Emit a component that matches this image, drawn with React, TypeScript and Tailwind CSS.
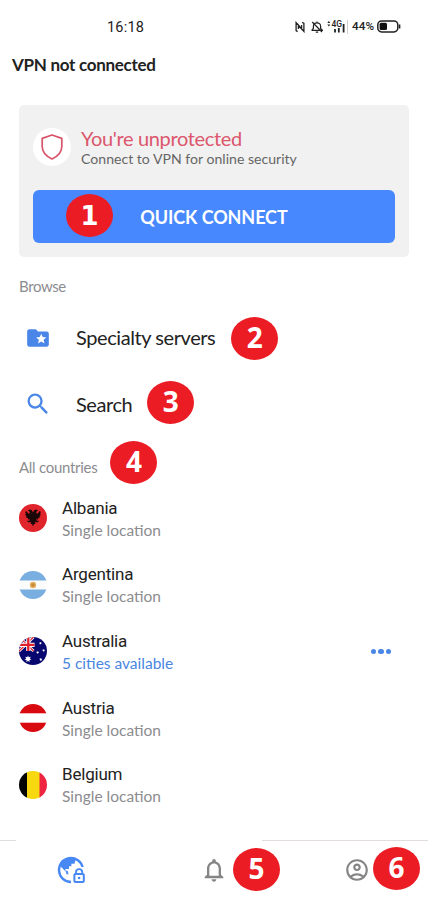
import { ReactNode } from "react";
import clsx from "clsx";
import {
  MdFolderSpecial,
  MdNotificationsNone,
  MdOutlineAccountCircle,
  MdSearch,
} from "react-icons/md";

interface ICountry {
  name: string;
  info: string;
  hasCities?: boolean;
  flag: ReactNode;
}

interface IBadge {
  num: number;
  className?: string;
}

const STAR =
  "M0,-1 L0.22,-0.46 L0.78,-0.62 L0.5,-0.11 L0.97,0.22 L0.4,0.31 L0.43,0.9 L0,0.5 L-0.43,0.9 L-0.4,0.31 L-0.97,0.22 L-0.5,-0.11 L-0.78,-0.62 L-0.22,-0.46 Z";

const Badge = ({ num, className }: IBadge) => (
  <span
    className={clsx(
      "flex h-[43px] w-[47px] shrink-0 items-center justify-center rounded-[50%] bg-[#ec1c24] leading-none font-bold text-white",
      // only the 1 needs a face with a foot serif
      num === 1
        ? "pt-px font-['DejaVu_Sans',sans-serif] text-[26px]"
        : "pb-[3px] font-['Open_Sans',sans-serif] text-[28px]",
      className,
    )}
  >
    {num}
  </span>
);

const AlbaniaFlag = () => (
  <>
    <rect width="28" height="28" fill="#e0242b" />
    <path
      fill="#1c0708"
      d="M14 8.6 12.7 6 10.4 5.5 9 6.8 10.5 7.4 10.8 9 9.5 9.8 7 6.8 6.2 9 7.3 9.7 6 10.2 7.2 11.3 6.4 12 7.8 12.8 7.2 13.8 9.2 14.2 9 15.6 11 15.2 10 17 8 16.6 9 18.2 11 18.2 12 17.6 11.6 20 13 20 14 22.6 15 20 16.4 20 16 17.6 17 18.2 19 18.2 20 16.6 18 17 17 15.2 19 15.6 18.8 14.2 20.8 13.8 20.2 12.8 21.6 12 20.8 11.3 22 10.2 20.7 9.7 21.8 9 21 6.8 18.5 9.8 17.2 9 17.5 7.4 19 6.8 17.6 5.5 15.3 6Z"
    />
  </>
);

const ArgentinaFlag = () => (
  <>
    <rect width="28" height="28" fill="#fcfcfc" />
    <rect width="28" height="9.5" fill="#78aee0" />
    <rect y="18.5" width="28" height="9.5" fill="#78aee0" />
    <circle cx="14" cy="14" r="3.2" fill="#e2b064" />
    <circle cx="14" cy="14" r="1.8" fill="#c98a3c" />
  </>
);

const AustraliaFlag = () => (
  <>
    <rect width="28" height="28" fill="#07076f" />
    <path d="M0 0 14.5 14M14.5 0 0 14" stroke="#fff" strokeWidth="3" />
    <path d="M0 0 14.5 14M14.5 0 0 14" stroke="#e0202c" strokeWidth="1.2" />
    <path d="M9.3 0V14M0 7.8H15.5" stroke="#fff" strokeWidth="4.2" />
    <path d="M9.3 0V14M0 7.8H15.5" stroke="#e0202c" strokeWidth="2.3" />
    <path d={STAR} fill="#fff" transform="translate(9 22) scale(3.6)" />
    <path d={STAR} fill="#fff" transform="translate(21.4 6.2) scale(1.4)" />
    <path d={STAR} fill="#fff" transform="translate(18.6 15.5) scale(1.5)" />
    <path d={STAR} fill="#fff" transform="translate(24.6 13.4) scale(1.5)" />
    <path d={STAR} fill="#fff" transform="translate(21.8 22.6) scale(1.6)" />
  </>
);

const AustriaFlag = () => (
  <>
    <rect width="28" height="28" fill="#fff" />
    <rect width="28" height="9.3" fill="#d80a10" />
    <rect y="18.7" width="28" height="9.3" fill="#d80a10" />
  </>
);

const BelgiumFlag = () => (
  <>
    <rect width="8" height="28" fill="#050505" />
    <rect x="8" width="13" height="28" fill="#f8d80e" />
    <rect x="20.5" width="7.5" height="28" fill="#ee2440" />
  </>
);

const countries: ICountry[] = [
  { name: "Albania", info: "Single location", flag: <AlbaniaFlag /> },
  { name: "Argentina", info: "Single location", flag: <ArgentinaFlag /> },
  { name: "Australia", info: "5 cities available", hasCities: true, flag: <AustraliaFlag /> },
  { name: "Austria", info: "Single location", flag: <AustriaFlag /> },
  { name: "Belgium", info: "Single location", flag: <BelgiumFlag /> },
];

const StatusBar = () => (
  <div className="flex h-[54px] items-center pr-[27px] pl-[107px] text-[#222]">
    <span className="mt-px font-[Roboto,sans-serif] text-[14.5px] tracking-[0.2px]">16:18</span>
    <div className="ml-auto flex items-center">
      <svg width="10" height="12" viewBox="0 0 10 12" fill="none" stroke="#222" strokeWidth="1.3">
        <path d="M2.6 10.6 1.1 9.6V1.6L6.6 8V4M7.2 1.3 8.9 2.4V10.4L3.4 4V8" />
      </svg>
      <svg
        className="ml-[6px]"
        width="12"
        height="12"
        viewBox="0 0 12 12"
        fill="none"
        stroke="#222"
        strokeWidth="1.2"
      >
        <path d="M.6 9.3H11.4L9.6 7.4V5.2C9.6 3 8 1.8 6 1.8S2.4 3 2.4 5.2V7.4L.6 9.3M6 .4V1.8M4.8 11.2H7.2M1.2 1 11 11" />
      </svg>
      <svg className="ml-1" width="19" height="14" viewBox="0 0 19 14">
        <path d="M.3 3 1.8 1 3.3 3ZM.3 4.6H3.3L1.8 6.6Z" fill="#222" />
        <text x="4.4" y="6.9" fontSize="8.5" fontWeight="500" fontFamily="Roboto, sans-serif" fill="#222">
          4G
        </text>
        <path d="M8 9V12.5M11.8 8V12.5M16.6 4V12.5" stroke="#222" strokeWidth="1.8" />
      </svg>
      <span className="ml-px h-[14px] w-px bg-[#cfcfcf]" />
      <span className="ml-1 font-[Roboto,sans-serif] text-[11.7px] font-medium">44%</span>
      <svg className="ml-[3px]" width="24" height="13" viewBox="0 0 24 13">
        <rect x=".8" y=".9" width="20" height="11" rx="3.8" fill="none" stroke="#222" strokeWidth="1.5" />
        <rect x="2.6" y="2.7" width="7.4" height="7.4" rx="1.5" fill="#111" />
        <path d="M22.6 4.5V8.5" stroke="#222" strokeWidth="1.5" />
      </svg>
    </div>
  </div>
);

const ConnectCard = () => (
  <div className="mx-[19px] mt-[29px] h-[152px] rounded-[5px] bg-[#f1f1f1] px-[14px] pt-[23px]">
    <div className="flex h-[38px] items-center">
      <div className="flex size-[38px] items-center justify-center rounded-full bg-white">
        <svg width="22" height="26" viewBox="0 0 22 26" fill="none" stroke="#d9546b" strokeWidth="1.7">
          <path
            strokeLinejoin="round"
            d="M11 1 20.8 4.4V12.5C20.8 18.5 16.5 22.4 11 25 5.5 22.4 1.2 18.5 1.2 12.5V4.4Z"
          />
        </svg>
      </div>
      <div className="ml-[10px] pt-px">
        <p className="text-[20px] leading-[22px] tracking-[-0.35px] text-[#dc566c]">You're unprotected</p>
        <p className="text-[14.1px] leading-5 text-[#666]">Connect to VPN for online security</p>
      </div>
    </div>
    <button className="relative mt-6 flex h-[53px] w-[362px] items-center justify-center rounded-[6px] bg-[#4788ff] pt-px text-[18px] font-bold tracking-[-0.1px] text-white">
      <Badge num={1} className="absolute top-[4px] left-[33px]" />
      QUICK CONNECT
    </button>
  </div>
);

const CountryRow = ({ country }: { country: ICountry }) => (
  <div className="flex h-[66.6px] items-center pl-[19px]">
    <svg className="size-7 rounded-full" viewBox="0 0 28 28" fill="none">
      {country.flag}
    </svg>
    <div className="ml-[15px] pt-px">
      <p className="font-[Roboto,sans-serif] text-[17px] leading-[22px] tracking-[-0.2px] text-[#222]">
        {country.name}
      </p>
      <p className={clsx("text-[15.5px] leading-[22px]", country.hasCities ? "text-[#4a86e0]" : "text-[#8c8c8f]")}>
        {country.info}
      </p>
    </div>
    {country.hasCities && (
      <div className="mr-[37px] ml-auto flex gap-[2px]">
        <span className="size-[5.5px] rounded-full bg-[#4a86e8]" />
        <span className="size-[5.5px] rounded-full bg-[#4a86e8]" />
        <span className="size-[5.5px] rounded-full bg-[#4a86e8]" />
      </div>
    )}
  </div>
);

const VpnIcon = () => (
  <svg width="28" height="28" viewBox="0 0 28 28" fill="none">
    <path d="M14 26A12 12 0 1 1 25.6 11" stroke="#4788f4" strokeWidth="2.4" />
    <path
      fill="#4788f4"
      d="M2 9 9.2 16V18L11.2 18.4V15.8L10 14.8H8.4V13H12V10.2H14.4V7.8H17.4L18.8 3.6 15 1.8H10L4.5 4.6Z"
    />
    <rect x="17.4" y="18" width="9.4" height="8" rx="1" stroke="#4788f4" strokeWidth="2" />
    <path d="M19 17.6V16.2a3.1 3.1 0 0 1 6.2 0V17.6" stroke="#4788f4" strokeWidth="1.8" />
    <circle cx="22.1" cy="22" r="1.3" fill="#4788f4" />
  </svg>
);

const BottomNav = () => (
  <div className="mt-auto h-[60px]">
    <div className="flex justify-between">
      <span className="h-px w-4 bg-[#dedede]" />
      <span className="h-px w-[166px] bg-[#e3dcde]" />
    </div>
    <div className="flex h-[59px] items-center pb-[2px]">
      <div className="ml-[57px]">
        <VpnIcon />
      </div>
      <MdNotificationsNone size={28} className="ml-[115px] text-[#858585]" />
      <Badge num={5} className="ml-[5px]" />
      <MdOutlineAccountCircle size={26} className="ml-16 text-[#858585]" />
      <Badge num={6} className="mb-[3px] ml-[3px]" />
    </div>
  </div>
);

const App = () => {
  return (
    <div className="flex h-[900px] w-[428px] flex-col overflow-hidden bg-white font-[Lato,sans-serif]">
      <StatusBar />
      <h1 className="pl-3 text-[17px] leading-[22px] font-bold tracking-[-0.28px] text-[#222]">
        VPN not connected
      </h1>
      <ConnectCard />
      <p className="h-[48px] pt-[19px] pl-[19px] text-[15px] leading-5 tracking-[-0.4px] text-[#8c8c8f]">Browse</p>
      <div className="flex h-[66px] items-center pl-[25px]">
        <MdFolderSpecial size={26} className="text-[#4a86e8]" />
        <span className="mb-[2px] ml-[25px] text-[20px] tracking-[-0.42px] text-[#222]">Specialty servers</span>
        <Badge num={2} className="ml-4" />
      </div>
      <div className="flex h-[66px] items-center pl-6">
        <MdSearch size={28} className="text-[#4a86e8]" />
        <span className="ml-6 text-[20px] tracking-[-0.42px] text-[#222]">Search</span>
        <Badge num={3} className="mb-1 ml-[15px]" />
      </div>
      <div className="flex h-[48px] pl-[19px]">
        <p className="pt-5 text-[15px] leading-5 tracking-[-0.28px] text-[#8c8c8f]">All countries</p>
        <Badge num={4} className="mt-1 ml-[13px]" />
      </div>
      {countries.map((country) => (
        <CountryRow key={country.name} country={country} />
      ))}
      <BottomNav />
    </div>
  );
};

export default App;
